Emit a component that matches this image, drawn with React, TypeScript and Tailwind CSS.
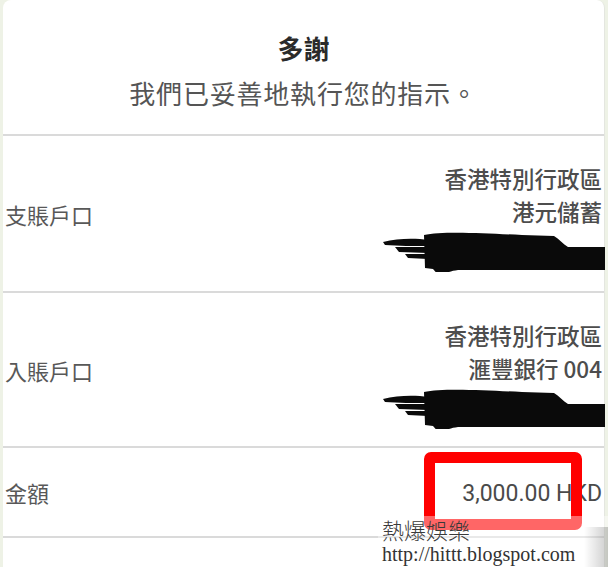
import React from "react";

function Scribble() {
  return (
    <svg width="223" height="44" viewBox="0 0 223 44" className="mr-[-3px] shrink-0">
      <g fill="#0a0a0a">
        <path d="M42 7 C60 3, 100 5, 140 7 L172 8 C177 11, 181 16, 186 19 L223 19 L223 42 L76 42 C68 43, 64 45, 58 48 C54 45, 53 43, 51 41 L43 40 Z" />
        <path d="M1 14 C16 10, 34 10, 46 12 L46 18 C32 18, 16 18, 3 17 Z" />
        <path d="M13 19 L46 19 L46 25 L17 24 Z" />
        <path d="M23 26 L46 26 L46 31 L26 30 Z" />
      </g>
    </svg>
  );
}

function Row({
  label,
  lines,
  heightClass,
}: {
  label: string;
  lines: string[];
  heightClass: string;
}) {
  return (
    <div className={`shrink-0 flex justify-between px-[2px] ${heightClass}`}>
      <div className="self-center text-[22px] leading-[30px] text-[#585858]">{label}</div>
      <div className="flex flex-col items-end pt-[26px]">
        {lines.map((l, i) => (
          <div key={i} className="text-[22.5px] leading-[33px] font-medium text-[#4d4d4d]">
            {l}
          </div>
        ))}
        <Scribble />
      </div>
    </div>
  );
}

export default function App() {
  return (
    <div className="relative w-[608px] h-[567px] overflow-hidden bg-[#eef2e6] font-['Noto_Sans_CJK_TC','Noto_Sans_CJK_SC',sans-serif]">
      <div className="ml-[3px] mr-[3px] h-full bg-white rounded-t-[8px] flex flex-col border-r border-[#e4e6e0]">
        <div className="shrink-0 h-[134px] flex flex-col items-center pt-[33px]">
          <div className="text-[26px] leading-[30px] font-bold text-[#2b2b2b]">多謝</div>
          <div className="mt-[15px] text-[26px] leading-[30px] tracking-[0.8px] text-[#555555]">
            我們已妥善地執行您的指示。
          </div>
        </div>
        <div className="shrink-0 h-[2px] bg-[#dadada]" />
        <Row label="支賬戶口" lines={["香港特別行政區", "港元儲蓄"]} heightClass="h-[155px]" />
        <div className="shrink-0 h-[2px] bg-[#dadada]" />
        <Row label="入賬戶口" lines={["香港特別行政區", "滙豐銀行 004"]} heightClass="h-[153px]" />
        <div className="shrink-0 h-[2px] bg-[#dadada]" />
        <div className="shrink-0 h-[88px] flex justify-between items-center px-[2px]">
          <div className="text-[22px] leading-[30px] text-[#585858]">金額</div>
          <div className="pt-[4px] text-[23px] leading-[30px] text-[#4a4a4a] font-['Roboto','Liberation_Sans',sans-serif]">
            3,000.00 HKD
          </div>
        </div>
        <div className="shrink-0 h-[2px] bg-[#dadada]" />
        <div className="flex-1" />
      </div>

      <div className="absolute left-[424px] top-[452px] w-[158px] h-[78px] border-[11px] border-[#ff0000] rounded-[7px]" />
      <div className="absolute left-[378px] top-[516px] right-0 bottom-0 bg-white/40" />
      <div className="absolute right-0 bottom-0 w-[24px] h-[40px] bg-gradient-to-l from-black/20 to-transparent" />
      <div className="absolute left-[382px] top-[515px] flex flex-col">
        <div className="text-[22px] leading-[28px] text-[#3a3a3a] font-light">熱爆娛樂</div>
        <div className="text-[20px] leading-[22px] text-[#333333] font-['Liberation_Serif',serif]">
          http://hittt.blogspot.com
        </div>
      </div>
    </div>
  );
}
